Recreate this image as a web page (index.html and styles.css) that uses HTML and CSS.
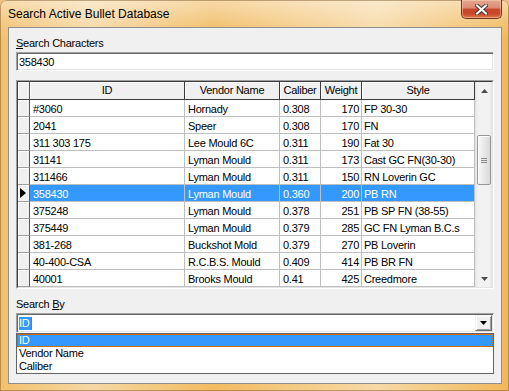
FILE: index.html
```html
<!DOCTYPE html>
<html lang="en">
<head>
    <meta charset="UTF-8">
    <title>Search Active Bullet Database</title>
    <link rel="stylesheet" href="styles.css">
</head>
<body>
    <div class="window">
        <div class="titlebar">
            <span class="title">Search Active Bullet Database</span>
            <div class="close-btn">
                <svg width="13" height="11" viewBox="0 0 13 11">
                    <path d="M2 1.5 L11 9.5 M11 1.5 L2 9.5" stroke="#4a3a36" stroke-width="4" stroke-linecap="square"/>
                    <path d="M2 1.5 L11 9.5 M11 1.5 L2 9.5" stroke="#fff" stroke-width="2" stroke-linecap="square"/>
                </svg>
            </div>
        </div>
        <div class="client">
            <div class="label"><u>S</u>earch Characters</div>
            <div class="textbox">358430</div>

            <div class="grid">
                <div class="grid-inner">
                    <div class="table">
                        <div class="row head">
                            <div class="ind"></div>
                            <div class="hcell">ID</div>
                            <div class="hcell">Vendor Name</div>
                            <div class="hcell">Caliber</div>
                            <div class="hcell">Weight</div>
                            <div class="hcell">Style</div>
                        </div>
                        <div class="row">
                            <div class="ind"></div><div class="cell">#3060</div><div class="cell">Hornady</div><div class="cell">0.308</div><div class="cell num">170</div><div class="cell">FP 30-30</div>
                        </div>
                        <div class="row">
                            <div class="ind"></div><div class="cell">2041</div><div class="cell">Speer</div><div class="cell">0.308</div><div class="cell num">170</div><div class="cell">FN</div>
                        </div>
                        <div class="row">
                            <div class="ind"></div><div class="cell">311 303 175</div><div class="cell">Lee Mould 6C</div><div class="cell">0.311</div><div class="cell num">190</div><div class="cell">Fat 30</div>
                        </div>
                        <div class="row">
                            <div class="ind"></div><div class="cell">31141</div><div class="cell">Lyman Mould</div><div class="cell">0.311</div><div class="cell num">173</div><div class="cell">Cast GC FN(30-30)</div>
                        </div>
                        <div class="row">
                            <div class="ind"></div><div class="cell">311466</div><div class="cell">Lyman Mould</div><div class="cell">0.311</div><div class="cell num">150</div><div class="cell">RN Loverin GC</div>
                        </div>
                        <div class="row selected">
                            <div class="ind"><span class="pointer"></span></div><div class="cell">358430</div><div class="cell">Lyman Mould</div><div class="cell">0.360</div><div class="cell num">200</div><div class="cell">PB RN</div>
                        </div>
                        <div class="row">
                            <div class="ind"></div><div class="cell">375248</div><div class="cell">Lyman Mould</div><div class="cell">0.378</div><div class="cell num">251</div><div class="cell">PB SP FN (38-55)</div>
                        </div>
                        <div class="row">
                            <div class="ind"></div><div class="cell">375449</div><div class="cell">Lyman Mould</div><div class="cell">0.379</div><div class="cell num">285</div><div class="cell">GC FN Lyman B.C.s</div>
                        </div>
                        <div class="row">
                            <div class="ind"></div><div class="cell">381-268</div><div class="cell">Buckshot Mold</div><div class="cell">0.379</div><div class="cell num">270</div><div class="cell">PB Loverin</div>
                        </div>
                        <div class="row">
                            <div class="ind"></div><div class="cell">40-400-CSA</div><div class="cell">R.C.B.S. Mould</div><div class="cell">0.409</div><div class="cell num">414</div><div class="cell">PB BR FN</div>
                        </div>
                        <div class="row">
                            <div class="ind"></div><div class="cell">40001</div><div class="cell">Brooks Mould</div><div class="cell">0.41</div><div class="cell num">425</div><div class="cell">Creedmore</div>
                        </div>
                    </div>

                    <!-- vertical scrollbar -->
                    <div class="vscroll">
                        <div class="arrow">
                            <svg width="7" height="4" viewBox="0 0 7 4"><polygon points="3.5,0 7,4 0,4" fill="#4d4d4d"/></svg>
                        </div>
                        <div class="track">
                            <div class="thumb">
                                <span class="grip"></span>
                            </div>
                        </div>
                        <div class="arrow">
                            <svg width="7" height="4" viewBox="0 0 7 4"><polygon points="0,0 7,0 3.5,4" fill="#4d4d4d"/></svg>
                        </div>
                    </div>
                </div>
            </div>

            <div class="label by">Search <u>B</u>y</div>
            <div class="combo">
                <div class="combo-text"><span class="sel">ID</span><span class="caret"></span></div>
                <div class="combo-btn">
                    <svg width="7" height="4" viewBox="0 0 7 4"><polygon points="0,0 7,0 3.5,4" fill="#000"/></svg>
                </div>
            </div>
            <div class="list">
                <div class="item active">ID</div>
                <div class="item">Vendor Name</div>
                <div class="item">Caliber</div>
            </div>
        </div>
    </div>
</body>
</html>
```

FILE: styles.css
```css
body {
    margin: 0;
    font-family: "Liberation Sans", Arial, sans-serif;
    font-size: 11px;
    letter-spacing: -0.25px;
    color: #000;
    background-color: #f2c27a;
}
.window {
    width: 509px;
    height: 391px;
    box-sizing: border-box;
    padding: 0 7px 7px 8px;
    display: flex;
    flex-direction: column;
    border-radius: 6px 6px 0 0;
    background:
        linear-gradient(to bottom, rgba(255, 255, 255, 0.45), rgba(255, 255, 255, 0.1) 27px, rgba(255, 255, 255, 0) 40px),
        linear-gradient(to right, #f2c06e 0%, #f6d8a4 18%, #f1bb62 42%, #f4cb85 58%, #f7d9a6 74%, #f0b85c 100%);
    box-shadow: inset 0 0 0 1px rgba(120, 80, 30, 0.45);
}
.titlebar {
    height: 27px;
    display: flex;
    align-items: flex-start;
}
.title {
    font-size: 12px;
    letter-spacing: 0;
    line-height: 14px;
    margin-top: 7px;
    color: #000;
}
.close-btn {
    margin-left: auto;
    width: 41px;
    height: 19px;
    box-sizing: border-box;
    border: 1px solid #6e3420;
    border-top: none;
    border-radius: 0 0 5px 5px;
    background: linear-gradient(to bottom, #e7a892 0%, #dc8a72 45%, #c9472a 50%, #c8472a 75%, #e0784a 100%);
    box-shadow: inset 0 0 0 1px rgba(255, 210, 190, 0.5);
    display: flex;
    align-items: center;
    justify-content: center;
}
.close-btn svg {
    display: block;
}
.client {
    flex: 1;
    background-color: #f0f0f0;
    border: 1px solid #8f8f8f;
    padding: 9px 7px 0 7px;
    display: flex;
    flex-direction: column;
}
.label {
    line-height: 13px;
    height: 13px;
}
.label u {
    text-decoration-thickness: 1px;
    text-underline-offset: 1px;
}
.textbox {
    margin-top: 2px;
    height: 19px;
    box-sizing: border-box;
    border: 1px solid;
    border-color: #a0a0a0 #fff #fff #a0a0a0;
    box-shadow: inset 1px 1px #696969, inset -1px -1px #e3e3e3;
    background-color: #fff;
    padding: 1px 2px 0;
    line-height: 16px;
}

/* data grid */
.grid {
    margin-top: 9px;
    height: 209px;
    box-sizing: border-box;
    border: 1px solid;
    border-color: #a0a0a0 #fff #fff #a0a0a0;
}
.grid-inner {
    height: 100%;
    box-sizing: border-box;
    border: 1px solid;
    border-color: #3c3c3c #e3e3e3 #e3e3e3 #3c3c3c;
    display: flex;
    background-color: #f0f0f0;
}
.table {
    width: 457px;
}
.row {
    display: grid;
    grid-template-columns: 12px 155px 95px 41px 41px 113px;
    height: 17px;
}
.row.head {
    height: 18px;
}
.ind {
    box-sizing: border-box;
    background-color: #f0f0f0;
    border-right: 1px solid #5a5a5a;
    border-bottom: 1px solid #a0a0a0;
    box-shadow: inset 1px 1px #fff;
    display: flex;
    align-items: center;
    padding-left: 2px;
}
.head .ind {
    border-bottom-color: #3c3c3c;
}
.pointer {
    width: 0;
    height: 0;
    border-left: 6px solid #000;
    border-top: 5px solid transparent;
    border-bottom: 5px solid transparent;
}
.hcell {
    box-sizing: border-box;
    background-color: #f0f0f0;
    border-right: 1px solid #3c3c3c;
    border-bottom: 1px solid #3c3c3c;
    box-shadow: inset 1px 1px #fff;
    text-align: center;
    line-height: 17px;
    white-space: nowrap;
    overflow: hidden;
}
.cell {
    box-sizing: border-box;
    background-color: #fff;
    border-right: 1px solid #bfbfbf;
    border-bottom: 1px solid #bfbfbf;
    padding: 1px 2px 0 3px;
    line-height: 16px;
    white-space: nowrap;
    overflow: hidden;
}
.cell.num {
    text-align: right;
    padding-right: 2px;
}
.row .cell:last-child {
    padding-left: 2px;
}
.selected .cell {
    background-color: #3399ff;
    color: #fff;
}

/* scrollbar */
.vscroll {
    width: 17px;
    display: flex;
    flex-direction: column;
    background: linear-gradient(to right, #e2e2e2, #f2f2f2 3px, #f2f2f2 14px, #e6e6e6);
}
.arrow {
    height: 17px;
    display: flex;
    align-items: center;
    justify-content: center;
    padding-left: 1px;
}
.arrow svg {
    display: block;
}
.track {
    flex: 1;
}
.thumb {
    margin: 36px 1px 0 2px;
    height: 50px;
    box-sizing: border-box;
    border: 1px solid #979797;
    border-radius: 2px;
    background: linear-gradient(to right, #f6f6f6, #e9e9e9 50%, #d9d9d9);
    box-shadow: inset 1px 1px #fff;
    display: flex;
    align-items: center;
    justify-content: center;
}
.grip {
    width: 6px;
    height: 5px;
    background: repeating-linear-gradient(to bottom, #8a8a8a 0, #8a8a8a 1px, transparent 1px, transparent 2px);
}

/* search by combo */
.label.by {
    margin-top: 9px;
}
.combo {
    margin-top: 2px;
    height: 20px;
    box-sizing: border-box;
    border: 1px solid;
    border-color: #a0a0a0 #fff #fff #a0a0a0;
    box-shadow: inset 1px 1px #696969, inset -1px -1px #e3e3e3;
    background-color: #fff;
    display: flex;
    padding: 1px 1px 1px 2px;
}
.combo-text {
    flex: 1;
    display: flex;
    align-items: center;
}
.sel {
    background-color: #3399ff;
    color: #fff;
    line-height: 13px;
    padding: 0 1px 0 0;
}
.caret {
    width: 1px;
    height: 13px;
    background-color: #cc6600;
}
.combo-btn {
    width: 17px;
    box-sizing: border-box;
    background-color: #f0f0f0;
    border: 1px solid;
    border-color: #f0f0f0 #696969 #696969 #f0f0f0;
    box-shadow: inset 1px 1px #fff, inset -1px -1px #a0a0a0;
    display: flex;
    align-items: center;
    justify-content: center;
}
.combo-btn svg {
    display: block;
}
.list {
    height: 41px;
    box-sizing: border-box;
    border: 1px solid #646464;
    background-color: #fff;
}
.item {
    height: 13px;
    line-height: 13px;
    padding-left: 2px;
}
.item.active {
    background-color: #3399ff;
    color: #fff;
    outline: 1px dotted #cc6600;
    outline-offset: -1px;
}
```
